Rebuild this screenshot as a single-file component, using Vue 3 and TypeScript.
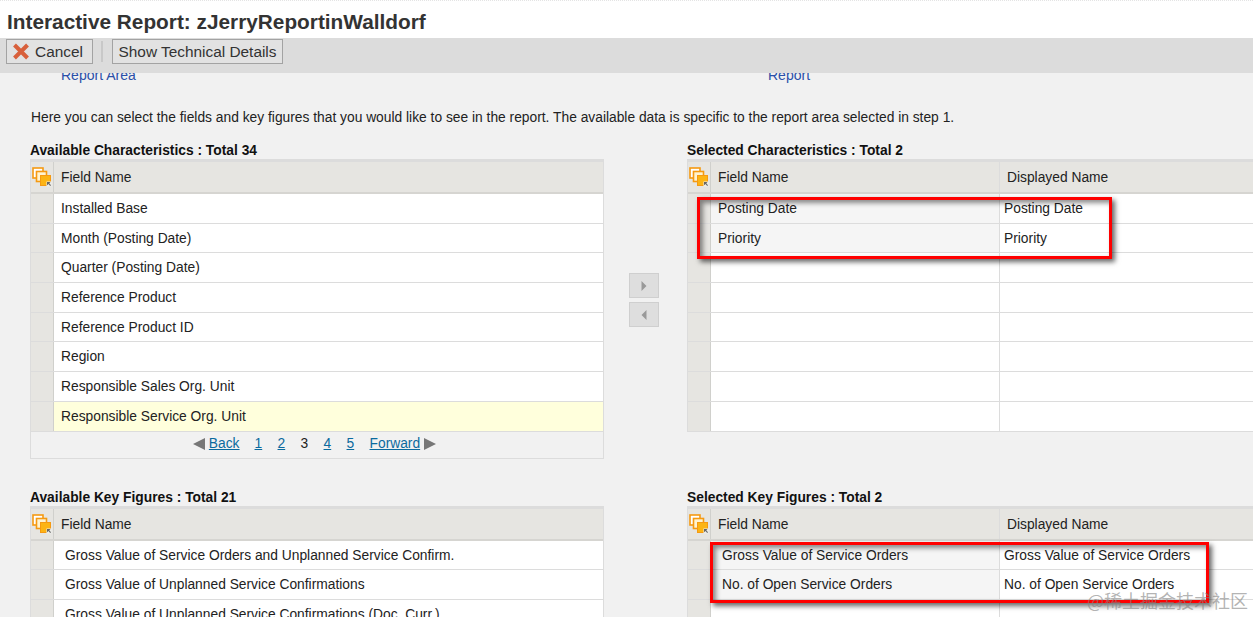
<script setup lang="ts">
const availableChars: string[] = [
  'Installed Base', 'Month (Posting Date)', 'Quarter (Posting Date)', 'Reference Product',
  'Reference Product ID', 'Region', 'Responsible Sales Org. Unit', 'Responsible Service Org. Unit',
]
const selectedChars = ['Posting Date', 'Priority', '', '', '', '', '', '']
const availableKeys: string[] = [
  'Gross Value of Service Orders and Unplanned Service Confirm.',
  'Gross Value of Unplanned Service Confirmations',
  'Gross Value of Unplanned Service Confirmations (Doc. Curr.)',
]
const selectedKeys = ['Gross Value of Service Orders', 'No. of Open Service Orders', '']
const pages = ['1', '2', '3', '4', '5']
</script>

<template>
  <div class="page">
    <header class="title">Interactive Report: zJerryReportinWalldorf</header>
    <div class="toolbar">
      <button class="btn cancel">
        <svg width="18" height="17" viewBox="0 0 18 17"><path d="M2.500 2 15.500 15M15.500 2 2.500 15" stroke="#d8603c" stroke-width="4" /></svg>
        <span>Cancel</span>
      </button>
      <span class="sep"></span>
      <button class="btn tech">Show Technical Details</button>
    </div>

    <main class="content">
      <div class="steps">
        <a class="step s1">Report Area</a>
        <a class="step s2">Report</a>
      </div>
      <p class="intro">Here you can select the fields and key figures that you would like to see in the report. The available data is specific to the report area selected in step 1.</p>

      <div class="grid">
        <section>
          <h3>Available Characteristics : Total 34</h3>
          <div class="table">
            <div class="row head">
              <div class="sel"><svg class="stack" width="20" height="20" viewBox="0 0 20 20"><use href="#stack-icon" /></svg></div>
              <div class="cell">Field Name</div>
            </div>
            <div v-for="(c, i) in availableChars" :key="c" class="row" :class="{ hl: i === 7 }">
              <div class="sel"></div>
              <div class="cell">{{ c }}</div>
            </div>
            <div class="pager">
              <svg width="14" height="14" viewBox="0 0 14 14"><path d="M1 7 13 1V13Z" fill="#777" /></svg>
              <a class="plink back">Back</a>
              <template v-for="p in pages" :key="p">
                <span v-if="p === '3'" class="pnum">3</span>
                <a v-else class="plink pnum">{{ p }}</a>
              </template>
              <a class="plink fwd">Forward</a>
              <svg width="14" height="14" viewBox="0 0 14 14"><path d="M1 1 13 7 1 13Z" fill="#777" /></svg>
            </div>
          </div>
        </section>

        <div class="moves">
          <div class="move"><svg width="8" height="12" viewBox="0 0 8 12"><path d="M1.500 1 6.500 6 1.500 11Z" fill="#999" /></svg></div>
          <div class="move"><svg width="8" height="12" viewBox="0 0 8 12"><path d="M6.500 1 1.500 6 6.500 11Z" fill="#999" /></svg></div>
        </div>

        <section>
          <h3>Selected Characteristics : Total 2</h3>
          <div class="table open">
            <div class="row head">
              <div class="sel"><svg class="stack" width="20" height="20" viewBox="0 0 20 20"><use href="#stack-icon" /></svg></div>
              <div class="cell field">Field Name</div>
              <div class="cell shown">Displayed Name</div>
            </div>
            <div v-for="(c, i) in selectedChars" :key="i" class="row">
              <div class="sel"></div>
              <div class="cell field" :class="{ filled: c }">{{ c }}</div>
              <div class="cell shown val">{{ c }}</div>
            </div>
            <div class="mark mark-a"></div>
          </div>
        </section>

        <section class="second">
          <h3>Available Key Figures : Total 21</h3>
          <div class="table">
            <div class="row head">
              <div class="sel"><svg class="stack" width="20" height="20" viewBox="0 0 20 20"><use href="#stack-icon" /></svg></div>
              <div class="cell">Field Name</div>
            </div>
            <div v-for="c in availableKeys" :key="c" class="row">
              <div class="sel"></div>
              <div class="cell ind">{{ c }}</div>
            </div>
          </div>
        </section>

        <div class="second"></div>

        <section class="second">
          <h3>Selected Key Figures : Total 2</h3>
          <div class="table open">
            <div class="row head">
              <div class="sel"><svg class="stack" width="20" height="20" viewBox="0 0 20 20"><use href="#stack-icon" /></svg></div>
              <div class="cell field">Field Name</div>
              <div class="cell shown">Displayed Name</div>
            </div>
            <div v-for="(c, i) in selectedKeys" :key="i" class="row">
              <div class="sel"></div>
              <div class="cell field ind" :class="{ filled: c }">{{ c }}</div>
              <div class="cell shown val">{{ c }}</div>
            </div>
            <div class="mark mark-b"></div>
          </div>
        </section>
      </div>
    </main>

    <div class="watermark">@稀土掘金技术社区</div>

    <svg class="defs" width="0" height="0">
      <symbol id="stack-icon" viewBox="0 0 20 20">
        <rect x="1" y="1" width="10" height="10" fill="#fff" stroke="#f59a12" stroke-width="1.600" />
        <rect x="4.500" y="4.500" width="10" height="10" fill="#fff3d0" stroke="#f59a12" stroke-width="1.600" />
        <rect x="8.500" y="8.500" width="10" height="10" fill="#fcb414" stroke="#f59a12" stroke-width="1" />
        <path d="M14.500 14.500h5v5h-5z" fill="#eeeeea" />
        <path d="M15 15h3.500l-1.200 1.200 1.700 2-.8.700-1.700-2-1.500 1.300z" fill="#666" />
      </symbol>
    </svg>
  </div>
</template>

<style>
html, body { margin: 0; overflow: hidden; }
</style>

<style scoped>
.page {
  position: relative;
  width: 1253px;
  height: 617px;
  overflow: hidden;
  display: flex;
  flex-direction: column;
  background: #f1f1f1;
  font-family: "Liberation Sans", Arial, sans-serif;
  font-size: 13.8px;
  color: #222;
}
.title {
  height: 38px;
  flex: none;
  box-sizing: border-box;
  padding: 9px 0 0 7px;
  background: #fff;
  border-top: 1px dotted #e4e4e4;
  font-size: 20.8px;
  line-height: 23px;
  font-weight: 700;
  color: #333;
}
.toolbar {
  height: 35px;
  flex: none;
  box-sizing: border-box;
  display: flex;
  align-items: flex-start;
  padding: 1px 0 0 6px;
  background: #dcdcdc;
}
.btn {
  height: 25px;
  box-sizing: border-box;
  border: 1px solid #a3a3a3;
  background: #e2e2e2;
  font: inherit;
  font-size: 15.4px;
  color: #333;
  padding: 0;
  display: flex;
  align-items: center;
  justify-content: center;
}
.cancel { width: 87px; gap: 5px; padding-right: 4px; }
.tech { width: 171px; }
.sep { width: 2px; height: 21px; margin: 2px 9px 0 8px; background: #c8c8c8; }
.content { flex: 1; min-height: 0; overflow: hidden; }
.steps { display: flex; height: 16px; margin-top: -6px; color: #2a4fa8; font-size: 14px; line-height: 16px; }
.step { display: block; }
.s1 { margin-left: 61px; width: 707px; }
.intro { margin: 27px 0 0 31px; line-height: 16px; color: #222; white-space: nowrap; }
.grid {
  display: grid;
  grid-template-columns: 574px 83px 566px;
  margin: 16px 0 0 30px;
}
h3 { margin: 0; height: 17px; font-size: 13.8px; line-height: 18px; font-weight: 700; color: #111; white-space: nowrap; }
.second { margin-top: 30px; }
.table {
  position: relative;
  box-sizing: border-box;
  border-top: 3px solid #dcdcdc;
  border-left: 1px solid #dcdcdc;
  border-right: 1px solid #dcdcdc;
  background: #fff;
}
.table.open { border-right: 0; }
.row {
  display: flex;
  height: 29.7px;
  box-sizing: border-box;
  border-bottom: 1px solid #dcdcdc;
  line-height: 30px;
}
.row.head { height: 32px; background: #e6e5e1; border-bottom: 2px solid #d6d5d1; line-height: 32px; }
.row.hl { background: #ffffdc; }
.sel {
  width: 22px;
  flex: none;
  background: #e6e5e1;
  border-right: 1px solid #d0d0cc;
}
.head .sel { background: #e6e5e1; }
.stack { display: block; margin: 5px 0 0 1px; }
.cell { flex: 1; padding-left: 7px; white-space: nowrap; overflow: hidden; }
.cell.ind { padding-left: 11px; }
.field { flex: none; width: 289px; box-sizing: border-box; border-right: 1px solid #dcdcdc; }
.filled { background: #f5f5f5; }
.shown { padding-left: 7px; }
.shown.val { padding-left: 4px; }
.pager {
  height: 27px;
  box-sizing: border-box;
  display: flex;
  align-items: center;
  justify-content: center;
  padding: 0 5px 2px 0;
  background: #f1f1f1;
  border-bottom: 1px solid #dcdcdc;
}
.plink { color: #0b6a9e; text-decoration: underline; }
.back { margin: 0 15px 0 3px; }
.pnum { width: 23px; flex: none; text-align: left; }
.fwd { margin: 0 3px 0 0; }
.moves { display: flex; flex-direction: column; gap: 4px; align-items: center; padding-top: 131px; padding-right: 4px; }
.move {
  width: 30px;
  height: 25px;
  box-sizing: border-box;
  border: 1px solid #cfcfcf;
  background: #dedede;
  display: flex;
  align-items: center;
  justify-content: center;
}
.mark {
  position: absolute;
  box-sizing: border-box;
  border: 3px solid #f00;
  box-shadow: 3px 3px 5px rgba(0, 0, 0, 0.6), inset 3px 3px 5px rgba(0, 0, 0, 0.45);
}
.mark-a { left: 9px; top: 35px; width: 415px; height: 62px; }
.mark-b { left: 22px; top: 33px; width: 499px; height: 61px; }
.watermark {
  position: absolute;
  left: 1087px;
  top: 589px;
  font-family: "Noto Sans CJK SC", "Liberation Sans", sans-serif;
  font-size: 18px;
  line-height: 22px;
  color: rgba(130, 130, 130, 0.6);
  white-space: nowrap;
}
.defs { position: absolute; }
</style>
